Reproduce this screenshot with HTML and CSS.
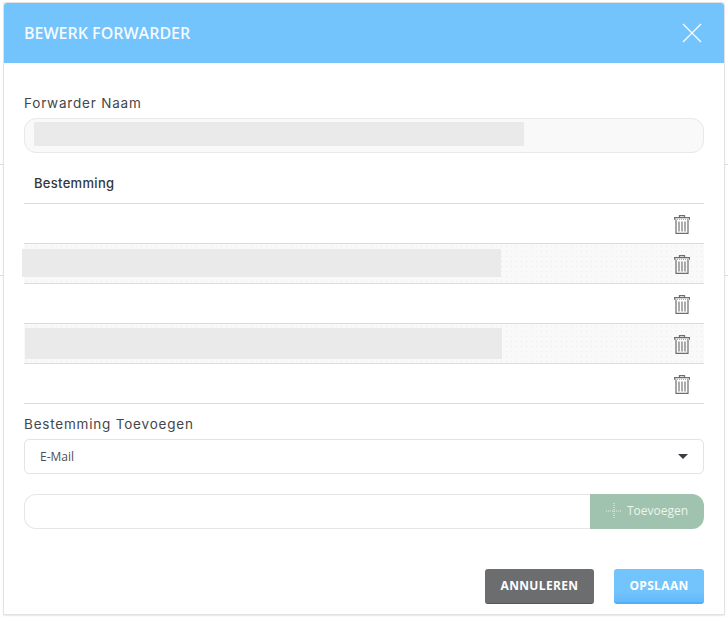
FILE: index.html
```html
<!DOCTYPE HTML>
<html lang="nl" dir="ltr">
<head>
    <meta charset="utf-8"/>
    <title>Bewerk Forwarder</title>
<link rel="stylesheet" href="styles.css">
</head>
<body>
    <div class="modal" role="dialog" aria-modal="true" aria-labelledby="modal-title">
        <header class="modal-header">
            <h2 id="modal-title">BEWERK FORWARDER</h2>
            <button class="modal-close" aria-label="close">
                <svg width="20" height="20" viewBox="0 0 20 20"><path d="M1 1 19 19M19 1 1 19" stroke="#fff" stroke-width="1.2" fill="none"/></svg>
            </button>
        </header>

        <div class="modal-body">
            <label class="field-label">Forwarder Naam</label>
            <div class="name-input"><span class="redacted redacted-name"></span></div>

            <div class="table-head">Bestemming</div>

            <div class="dest-row">
                <button class="trash" aria-label="delete">
                    <svg width="16" height="19" viewBox="0 0 16 19"><use href="#trash-icon"/></svg>
                </button>
            </div>
            <div class="dest-row dest-row-alt">
                <span class="redacted redacted-first"></span>
                <button class="trash" aria-label="delete">
                    <svg width="16" height="19" viewBox="0 0 16 19"><use href="#trash-icon"/></svg>
                </button>
            </div>
            <div class="dest-row">
                <button class="trash" aria-label="delete">
                    <svg width="16" height="19" viewBox="0 0 16 19"><use href="#trash-icon"/></svg>
                </button>
            </div>
            <div class="dest-row dest-row-alt">
                <span class="redacted redacted-second"></span>
                <button class="trash" aria-label="delete">
                    <svg width="16" height="19" viewBox="0 0 16 19"><use href="#trash-icon"/></svg>
                </button>
            </div>
            <div class="dest-row">
                <button class="trash" aria-label="delete">
                    <svg width="16" height="19" viewBox="0 0 16 19"><use href="#trash-icon"/></svg>
                </button>
            </div>

            <label class="field-label field-label-add">Bestemming Toevoegen</label>
            <div class="select-box">
                <span>E-Mail</span>
                <span class="select-caret"></span>
            </div>

            <div class="add-group">
                <div class="add-input"></div>
                <button class="add-button">
                    <svg width="16" height="16" viewBox="0 0 16 16"><path d="M0 8H16M8 0V16" stroke="#e4efe8" stroke-width="1" stroke-dasharray="1 1" fill="none"/></svg>
                    Toevoegen
                </button>
            </div>
        </div>

        <footer class="modal-footer">
            <button class="btn btn-cancel">ANNULEREN</button>
            <button class="btn btn-save">OPSLAAN</button>
        </footer>
    </div>

    <!-- Shared trash icon -->
    <svg class="icon-defs" aria-hidden="true">
        <symbol id="trash-icon" viewBox="0 0 16 19">
            <path d="M5.5 2.5V.7H10.5V2.5M.6 4.8V2.7H15.4V4.8M2 4.8V18.3H14V4.8" fill="none" stroke="#6d6d6d" stroke-width="1.2"/>
            <path d="M1 4.3H15" stroke="#9a9a9a" stroke-width="1" stroke-dasharray="1 1"/>
            <path d="M5 6.5V16.5M8 6.5V16.5M11 6.5V16.5" stroke="#8a8a8a" stroke-width="1.4"/>
        </symbol>
    </svg>
</body>
</html>
```

FILE: styles.css
```css
* {
    box-sizing: border-box;
}

html, body {
    height: 100%;
}

body {
    margin: 0;
    padding: 3px 4px 0;
    overflow: hidden;
    background-color: #fff;
    background-image:
        linear-gradient(#dedede, #dedede),
        linear-gradient(#dedede, #dedede);
    background-size: 100% 1px;
    background-position: 0 164px, 0 275px;
    background-repeat: no-repeat;
    font-family: "Open Sans", "Liberation Sans", sans-serif;
    color: #3c4043;
}

button {
    font-family: inherit;
    border: 0;
    padding: 0;
    background: none;
}

.icon-defs {
    display: none;
}

.modal {
    display: flex;
    flex-direction: column;
    width: 720px;
    height: 611px;
    background: #fff;
    border-radius: 3px 3px 0 0;
    box-shadow: 0 0 0 1px #e2e2e2, 0 1px 2px rgba(0, 0, 0, 0.3);
}

.modal-header {
    display: flex;
    align-items: center;
    justify-content: space-between;
    height: 60px;
    padding: 0 22px 0 20px;
    flex-shrink: 0;
    background: #73c3fd;
    border-radius: 3px 3px 0 0;
}

.modal-header h2 {
    margin: -1px 0 0;
    font-size: 16px;
    font-weight: 600;
    color: #f4faff;
}

.modal-close {
    display: flex;
}

.modal-body {
    flex: 1;
    padding: 32px 20px 0;
}

.field-label {
    display: block;
    height: 23px;
    font-family: "Inter", "Liberation Sans", sans-serif;
    font-size: 13.5px;
    line-height: 17px;
    letter-spacing: 0.8px;
    color: #43474b;
}

.name-input {
    display: flex;
    align-items: flex-start;
    height: 35px;
    padding: 3px 0 0 9px;
    background: #f9f9f9;
    border: 1px solid #e8e8e8;
    border-radius: 12px;
}

.redacted {
    display: block;
    background: #eaeaea;
}

.redacted-name {
    width: 490px;
    height: 24px;
}

.table-head {
    height: 51px;
    padding: 21px 0 0 10px;
    border-bottom: 1px solid #dcdcdc;
    font-family: "Inter", "Liberation Sans", sans-serif;
    font-size: 13px;
    font-weight: 500;
    line-height: 18px;
    letter-spacing: 0.3px;
    color: #33373a;
}

.dest-row {
    display: flex;
    align-items: center;
    height: 40px;
    padding-right: 14px;
    border-bottom: 1px solid #dcdcdc;
}

.dest-row-alt {
    background-color: #f9f9f9;
    background-image: radial-gradient(#ececec 0.5px, transparent 0.6px);
    background-size: 5px 5px;
}

.redacted-first {
    width: 479px;
    height: 28px;
    margin: -1px 0 0 -2px;
}

.redacted-second {
    width: 477px;
    height: 31px;
    margin: -1px 0 0 1px;
}

.trash {
    display: flex;
    margin: 2px 0 0 auto;
}

.field-label-add {
    height: 35px;
    padding-top: 12px;
}

.select-box {
    display: flex;
    align-items: center;
    justify-content: space-between;
    height: 35px;
    padding: 0 15px 0 15px;
    border: 1px solid #e3e3e3;
    border-radius: 5px;
    font-size: 12px;
    color: #4b4f53;
}

.select-caret {
    width: 0;
    height: 0;
    border-style: solid;
    border-width: 5px 5.5px 0;
    border-color: #3a3d42 transparent transparent;
}

.add-group {
    display: flex;
    height: 35px;
    margin-top: 20px;
}

.add-input {
    flex: 1;
    border: 1px solid #e6e6e6;
    border-right: 0;
    border-radius: 12px 0 0 12px;
}

.add-button {
    display: flex;
    align-items: center;
    justify-content: center;
    gap: 5px;
    width: 114px;
    padding-bottom: 2px;
    background: #9fc3ae;
    border-radius: 0 12px 12px 0;
    font-size: 12px;
    color: #edf4ef;
}

.modal-footer {
    display: flex;
    justify-content: flex-end;
    gap: 20px;
    padding: 0 20px 10px;
}

.btn {
    height: 35px;
    border-radius: 3px;
    font-size: 12px;
    font-weight: 700;
    letter-spacing: 0.35px;
    color: #fff;
}

.btn-cancel {
    width: 109px;
    padding-bottom: 2px;
    background: #6c6d6f;
    border-bottom: 1px solid #55565a;
}

.btn-save {
    width: 90px;
    background: linear-gradient(#73c3fd 70%, #62b9fa);
    border-bottom: 2px solid #4fb0f8;
}
```
